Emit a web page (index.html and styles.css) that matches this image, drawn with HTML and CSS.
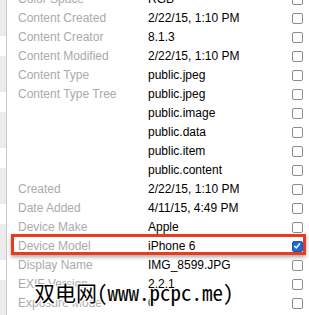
FILE: index.html
```html
<!DOCTYPE html>
<html lang="en">
<head>
    <meta charset="UTF-8">
    <title>Metadata</title>
    <link rel="stylesheet" href="styles.css">
</head>
<body>
    <div class="panel">
        <div class="gutter"></div>
        <div class="rows">
            <div class="row"><span class="label">Color Space</span><span class="value">RGB</span><span class="check"></span></div>
            <div class="row"><span class="label">Content Created</span><span class="value">2/22/15, 1:10 PM</span><span class="check"></span></div>
            <div class="row"><span class="label">Content Creator</span><span class="value">8.1.3</span><span class="check"></span></div>
            <div class="row"><span class="label">Content Modified</span><span class="value">2/22/15, 1:10 PM</span><span class="check"></span></div>
            <div class="row"><span class="label">Content Type</span><span class="value">public.jpeg</span><span class="check"></span></div>
            <div class="row"><span class="label">Content Type Tree</span><span class="value">public.jpeg</span><span class="check"></span></div>
            <div class="row"><span class="label"></span><span class="value">public.image</span><span class="check"></span></div>
            <div class="row"><span class="label"></span><span class="value">public.data</span><span class="check"></span></div>
            <div class="row"><span class="label"></span><span class="value">public.item</span><span class="check"></span></div>
            <div class="row"><span class="label"></span><span class="value">public.content</span><span class="check"></span></div>
            <div class="row"><span class="label">Created</span><span class="value">2/22/15, 1:10 PM</span><span class="check"></span></div>
            <div class="row"><span class="label">Date Added</span><span class="value">4/11/15, 4:49 PM</span><span class="check"></span></div>
            <div class="row"><span class="label">Device Make</span><span class="value">Apple</span><span class="check"></span></div>
            <div class="row highlight"><span class="label">Device Model</span><span class="value">iPhone 6</span><span class="check checked"><svg viewBox="0 0 10 10" width="10" height="10"><path d="M2.6 5.2 L4.3 7 L7.6 2.8" fill="none" stroke="#fff" stroke-width="1.5" stroke-linecap="round" stroke-linejoin="round"/></svg></span></div>
            <div class="row"><span class="label">Display Name</span><span class="value">IMG_8599.JPG</span><span class="check"></span></div>
            <div class="row"><span class="label">EXIF Version</span><span class="value">2.2.1</span><span class="check"></span></div>
            <div class="row"><span class="label">Exposure Mode</span><span class="value">0</span><span class="check"></span></div>
        </div>
        <div class="watermark">双电网(www.pcpc.me)</div>
    </div>
</body>
</html>
```

FILE: styles.css
```css
html, body {
    margin: 0;
    background: #fff;
    overflow: hidden;
}
body {
    font-family: "Liberation Sans", Arial, sans-serif;
    font-size: 12px;
}
.panel {
    position: relative;
    display: flex;
    height: 315px;
}
.gutter {
    width: 6px;
    flex: none;
    border-right: 1px solid #c9c9c9;
    background: repeating-linear-gradient(to bottom, #ececec 0, #ececec 36px, #fff 36px, #fff 56px);
}
.rows {
    flex: 1;
    margin-top: -10px;
    padding-left: 11px;
    padding-right: 6px;
}
.row {
    position: relative;
    display: grid;
    grid-template-columns: 130px 1fr 11px;
    align-items: center;
    height: 19px;
    line-height: 19px;
}
.label {
    color: #aaa;
}
.value {
    color: #000;
}
.check {
    width: 9px;
    height: 9px;
    border: 1px solid #8c8c8c;
    border-radius: 2px;
    background: #fff;
}
.check svg {
    display: block;
    margin: -1px;
}
.check.checked {
    background: #1b6bd6;
    border-color: #1558b8;
}
.highlight::after {
    content: "";
    position: absolute;
    left: -7px;
    right: -3px;
    top: -3px;
    bottom: 1px;
    border: 3px solid #ea3a1f;
    box-shadow: 0 2px 4px rgba(0, 0, 0, 0.35);
}
.watermark {
    position: absolute;
    left: 34px;
    top: 280px;
    font-family: "Noto Sans Mono CJK SC", "Noto Sans CJK SC", monospace;
    font-size: 21px;
    line-height: 24px;
    color: #000;
    text-shadow: 1px 0 #fff, -1px 0 #fff, 0 1px #fff, 0 -1px #fff, 1px 1px #fff, -1px -1px #fff, 1px -1px #fff, -1px 1px #fff;
    white-space: nowrap;
}
```
